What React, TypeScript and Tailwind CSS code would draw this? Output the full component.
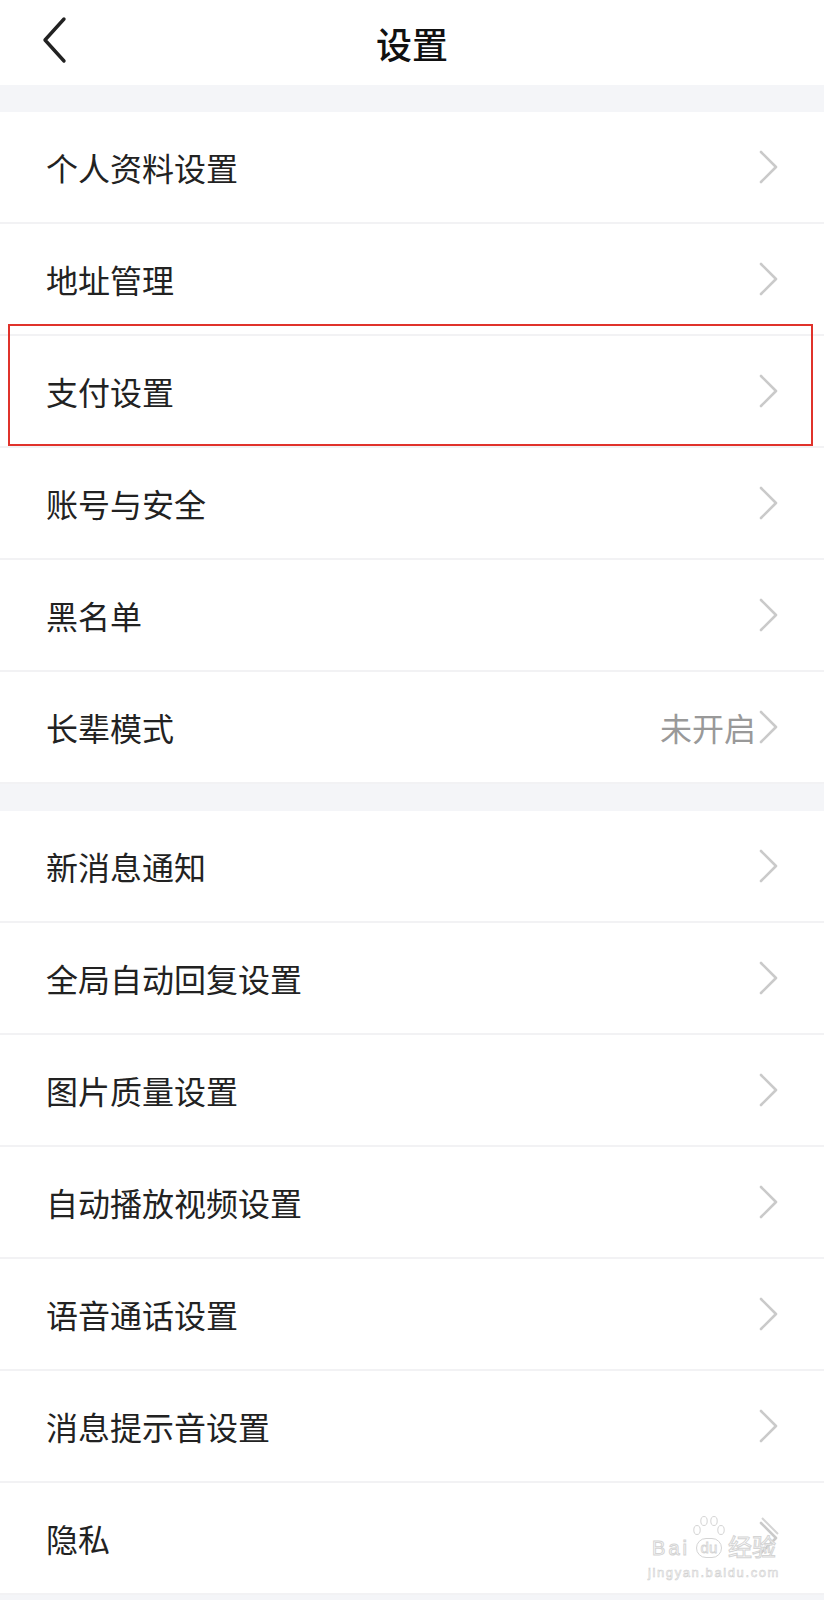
const font = { fontFamily: '"Noto Sans CJK SC", "Noto Sans", sans-serif' };

const sections: { label: string; value?: string; highlight?: boolean }[][] = [
  [
    { label: "个人资料设置" },
    { label: "地址管理" },
    { label: "支付设置", highlight: true },
    { label: "账号与安全" },
    { label: "黑名单" },
    { label: "长辈模式", value: "未开启" },
  ],
  [
    { label: "新消息通知" },
    { label: "全局自动回复设置" },
    { label: "图片质量设置" },
    { label: "自动播放视频设置" },
    { label: "语音通话设置" },
    { label: "消息提示音设置" },
    { label: "隐私" },
  ],
];

function Chevron() {
  return (
    <svg width="24" height="34" viewBox="0 0 24 34" className="shrink-0">
      <path d="M5 2 L20 17 L5 32" fill="none" stroke="#cacaca" strokeWidth="2.6" strokeLinecap="round" strokeLinejoin="round" />
    </svg>
  );
}

function Watermark() {
  return (
    <div className="pointer-events-none absolute right-[44px] bottom-[21px] flex flex-col items-center">
      <div className="flex items-end gap-[3px]">
        <span className="font-['Liberation_Sans'] text-[20px] leading-none tracking-[3px] text-white [-webkit-text-stroke:1px_#d4d4d4]">Bai</span>
        <div className="relative flex flex-col items-center">
          <svg width="32" height="22" viewBox="0 0 32 22">
            <ellipse cx="4" cy="14" rx="3.2" ry="4.5" fill="none" stroke="#d4d4d4" />
            <ellipse cx="11" cy="5" rx="3.2" ry="4.5" fill="none" stroke="#d4d4d4" />
            <ellipse cx="21" cy="5" rx="3.2" ry="4.5" fill="none" stroke="#d4d4d4" />
            <ellipse cx="28" cy="14" rx="3.2" ry="4.5" fill="none" stroke="#d4d4d4" />
          </svg>
          <span className="rounded-full border border-[#d4d4d4] px-[4px] font-['Liberation_Sans'] text-[15px] leading-[18px] text-white [-webkit-text-stroke:0.8px_#d4d4d4]">du</span>
        </div>
        <span className="relative text-[24px] leading-none text-white [-webkit-text-stroke:1px_#d4d4d4]" style={font}>
          经验
          <svg width="20" height="20" viewBox="0 0 20 20" className="absolute -top-[18px] -right-[4px]">
            <path d="M2 2 L18 18" stroke="#d4d4d4" strokeWidth="2" />
          </svg>
        </span>
      </div>
      <span className="mt-[8px] font-['Liberation_Sans'] text-[13px] leading-none tracking-[1.6px] text-white [-webkit-text-stroke:0.6px_#d0d0d0]">
        jingyan.baidu.com
      </span>
    </div>
  );
}

export default function App() {
  return (
    <div className="relative min-h-[1600px] w-[824px] bg-[#f4f5f8]" style={font}>
      <header className="relative flex h-[85px] items-center justify-center bg-white">
        <svg width="30" height="50" viewBox="0 0 30 50" className="absolute left-[40px] top-[16px]">
          <path d="M24 3 L5 24 L24 45" fill="none" stroke="#222" strokeWidth="3.4" strokeLinecap="round" strokeLinejoin="round" />
        </svg>
        <h1 className="text-[36px] font-medium text-[#111]">设置</h1>
      </header>

      {sections.map((rows, i) => (
        <div key={i} className="mt-[27px] bg-white">
          {rows.map((row) => (
            <div key={row.label} className="relative flex h-[112px] items-center border-b-2 border-[#f2f2f4] pl-[46px] pr-[44px]">
              <span className="flex-1 text-[32px] text-[#222]">{row.label}</span>
              {row.value && <span className="text-[32px] text-[#999]">{row.value}</span>}
              <Chevron />
              {row.highlight && (
                <div className="pointer-events-none absolute left-[8px] right-[11px] -top-[12px] bottom-0 border-2 border-[#e0322b]" />
              )}
            </div>
          ))}
        </div>
      ))}

      <Watermark />
    </div>
  );
}
